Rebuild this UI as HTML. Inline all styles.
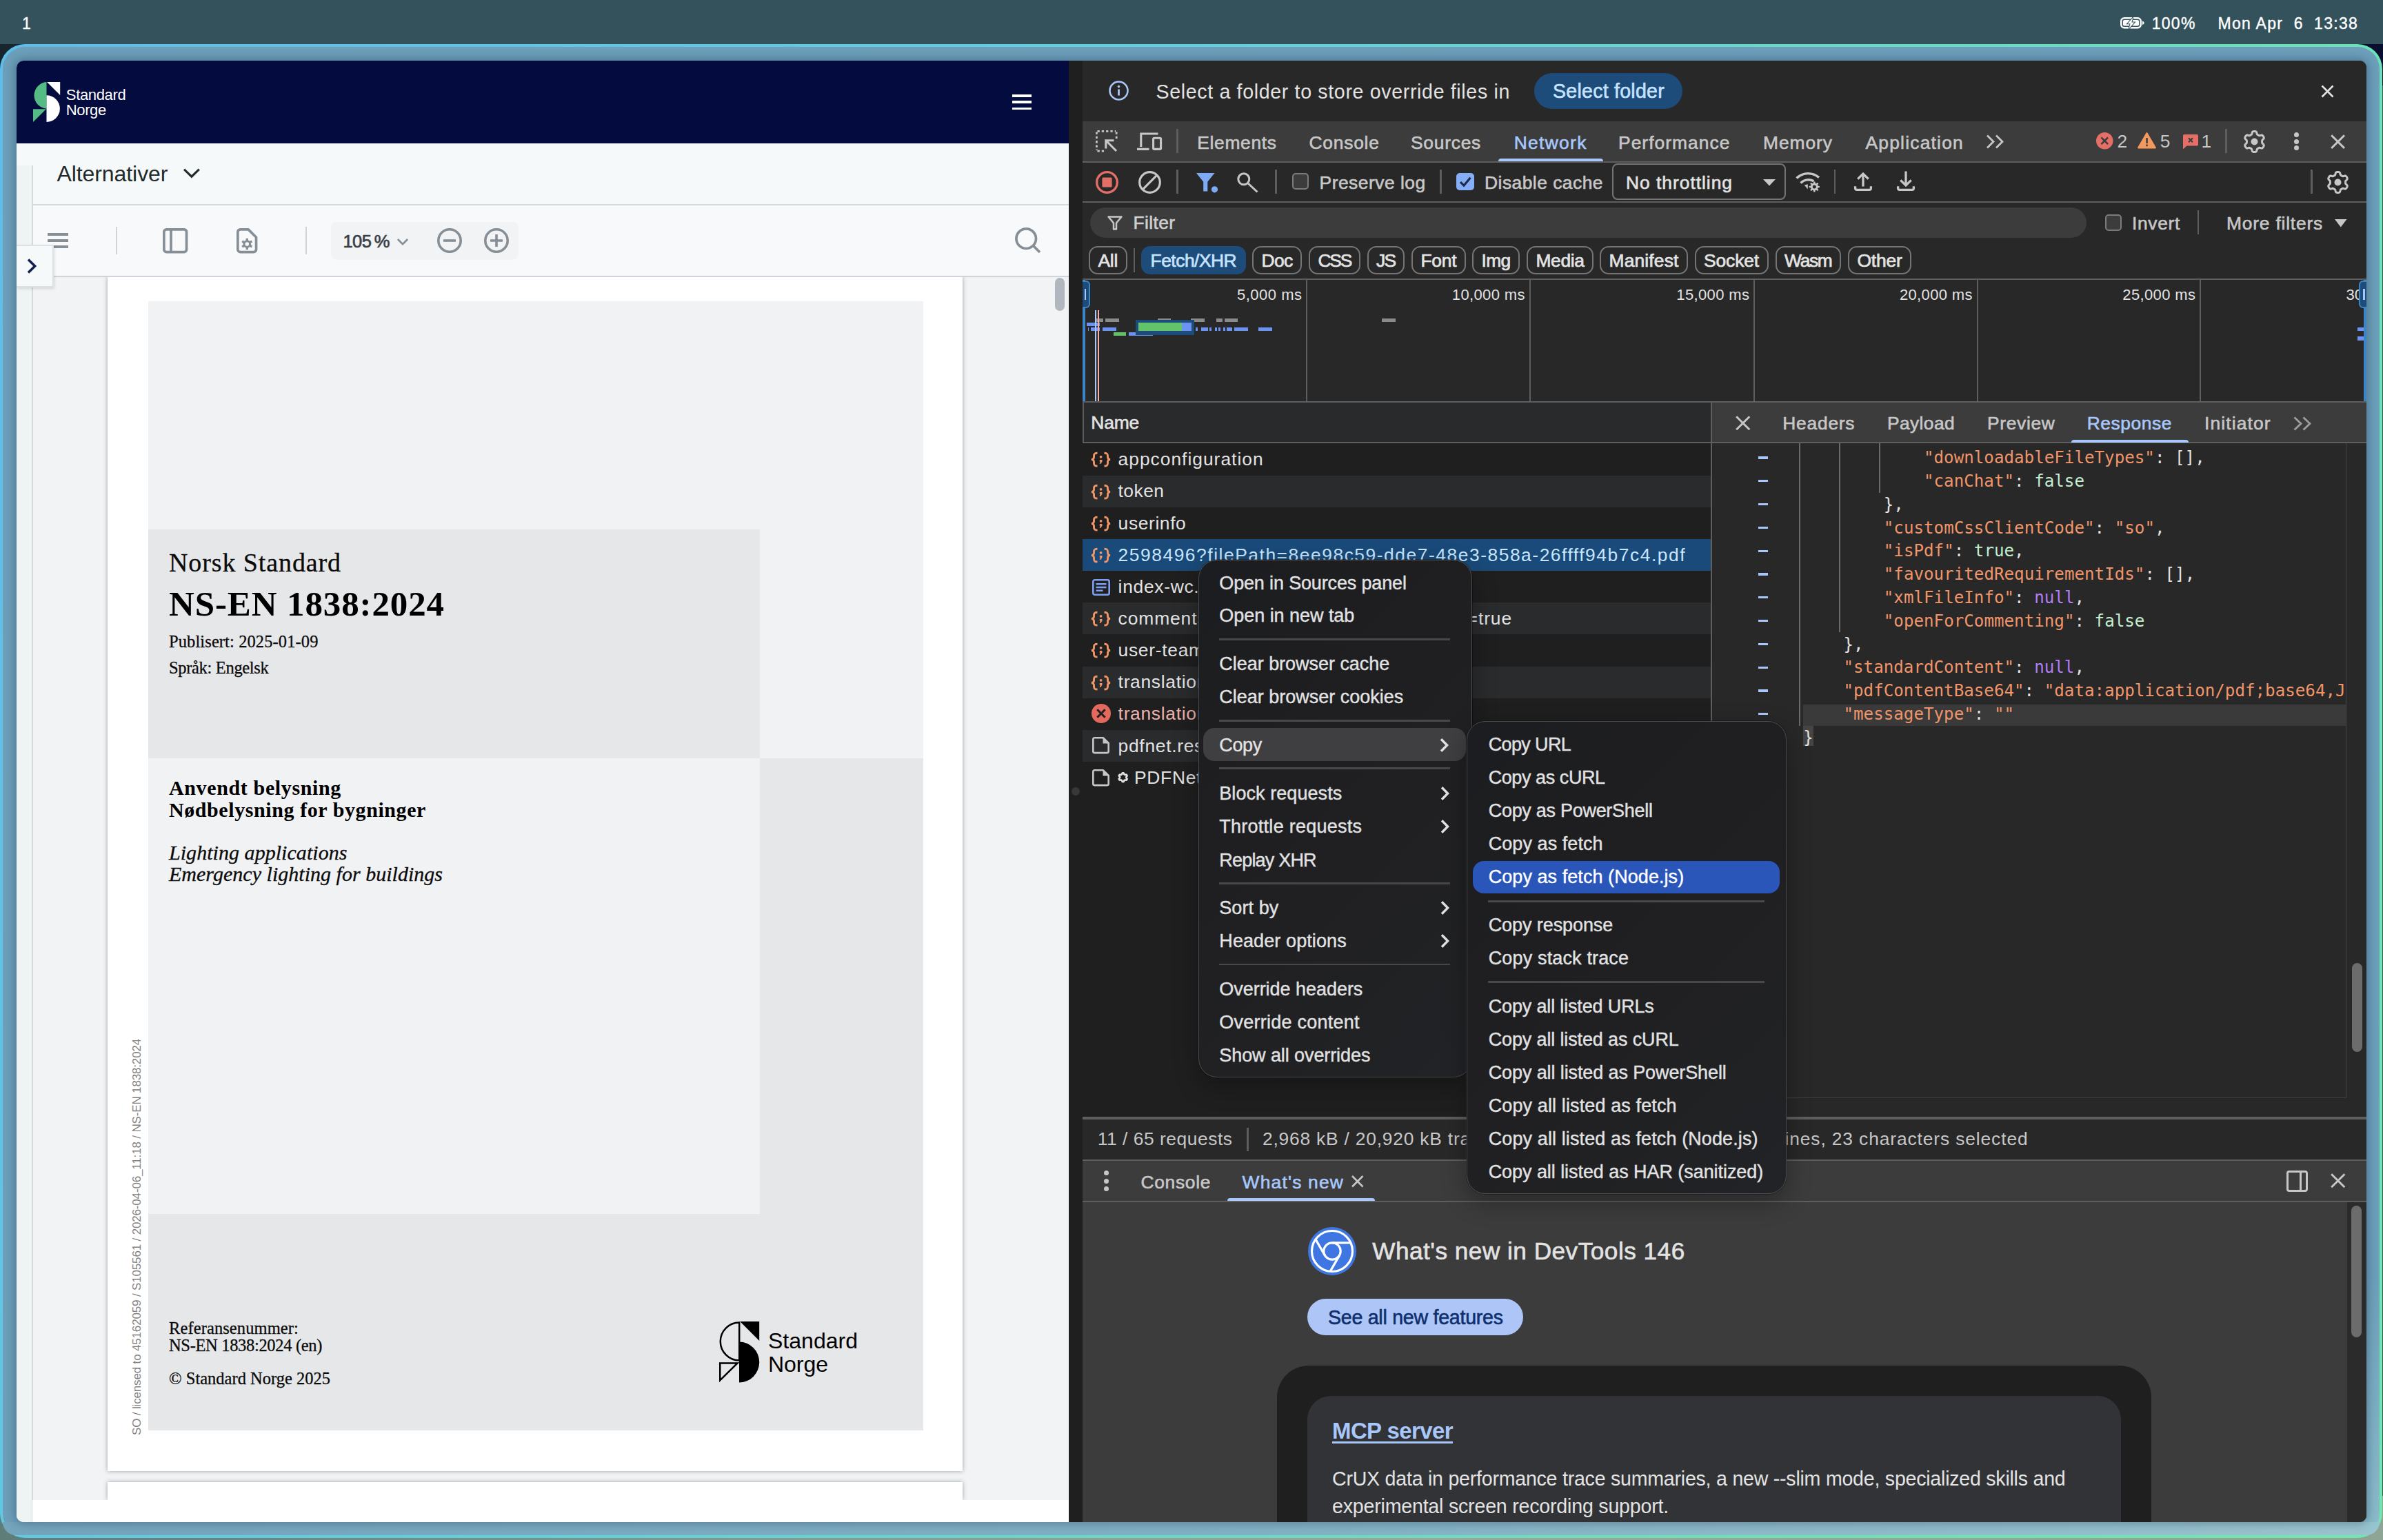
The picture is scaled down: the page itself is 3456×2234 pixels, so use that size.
<!DOCTYPE html><html lang="en"><head><meta charset="utf-8"><title>NS-EN 1838:2024 - DevTools</title><style>
html,body{margin:0;padding:0}
body{width:3456px;height:2234px;position:relative;overflow:hidden;background:#34525b;font-family:"Liberation Sans",Arial,sans-serif;}
div,svg,section,header,nav,main,aside,footer,ul,li,button,a,h1,h2,p,.t{position:absolute;box-sizing:border-box;margin:0;padding:0}
section,header,nav,main,aside,footer,ul{left:0;top:0}
li{list-style:none}
button{border:0;font:inherit}
a{text-decoration:none}
.t{white-space:pre;line-height:1;font-weight:400}
svg{overflow:visible}
.clip{overflow:hidden}
@media (min-resolution:1.5dppx) and (max-width:1800px){html{zoom:.5}}
</style></head><body><header id="menubar" style=""><div style="left:0px;top:0px;width:3456px;height:64px;background:#34525b;"></div><span class="t" style="left:32.0px;top:23.0px;font-size:23px;color:#ffffff;-webkit-text-stroke:.4px;">1</span><svg style="left:3075px;top:25px;" width="36" height="17" viewBox="0 0 36 17"><rect x="1.25" y="1.25" width="28.5" height="14" rx="4.5" fill="none" stroke="#fff" stroke-width="2.5"/><rect x="4" y="4" width="23" height="8.5" rx="2" fill="#fff"/><path d="M32 5.5v5.5c1.6-.5 2.6-1.500 2.600-2.750S33.600 6 32 5.500z" fill="#fff"/><path d="M18.500 0.500 10.500 9.200h4.200L12.500 16.500 20.500 7.600h-4.200z" fill="#fff" stroke="#34525b" stroke-width="2" paint-order="stroke"/></svg><span class="t" style="left:3120.7px;top:23.0px;font-size:23px;color:#ffffff;letter-spacing:1.293px;-webkit-text-stroke:.4px;">100%</span><span class="t" style="left:3216.6px;top:23.0px;font-size:23px;color:#ffffff;letter-spacing:1.290px;-webkit-text-stroke:.4px;">Mon Apr  6  13:38</span></header><div style="left:0px;top:64px;width:60px;height:60px;background:#16262c;"></div><div style="left:3396px;top:64px;width:60px;height:60px;background:#0a0e2e;"></div><div style="left:0px;top:2170px;width:3456px;height:64px;background:linear-gradient(90deg,#5f7d78 0%,#7f9a8c 30%,#9aa79a 60%,#8ea596 100%);"></div><div id="window" style="left:0px;top:64px;width:3455px;height:2167px;border-radius:36px;background:linear-gradient(115deg,#60bcea 0%,#63cfdb 40%,#6be0b8 75%,#70e8ac 100%);"><div style="left:4px;top:4px;width:3447px;height:2159px;background:#6c9fba;border-radius:32px;"></div><div style="left:4px;top:2144px;width:3447px;height:19px;border-radius:0 0 32px 32px;background:linear-gradient(90deg,#74a5bd 0%,#81b0c4 50%,#9ac3ce 100%);"></div><div style="left:3428px;top:1786px;width:23px;height:377px;border-radius:0 0 30px 0;background:linear-gradient(180deg,rgba(150,198,208,0) 0%,rgba(150,198,208,.75) 100%);"></div><div style="left:24px;top:24px;width:3408px;height:2120px;border-radius:10px;box-shadow:0 0 14px 2px rgba(25,50,75,.38);"></div></div><main id="page" class="clip" style="left:24px;top:88px;width:1526px;height:2120px;border-radius:10px 0 0 10px;background:#f1f3f5;"><header id="site-header" style=""><div style="left:0px;top:0px;width:1526px;height:120px;background:#030b3f;"></div><svg style="left:24px;top:31px;" width="39.2" height="58" viewBox="0 0 39.2 58"><path d="M19.500 0A19.400 19.400 0 0 0 19.500 38.700z" fill="#55bb85"/><path d="M0 39.200H18.900L0 58z" fill="#55bb85"/><path d="M20.100 0H39.200V19.100z" fill="#fff"/><path d="M19.500 19.300A19.400 19.350 0 0 1 19.500 58z" fill="#fff"/></svg><span class="t" style="left:71.8px;top:38.5px;font-size:22px;color:#fff;letter-spacing:-0.337px;">Standard</span><span class="t" style="left:71.8px;top:60.8px;font-size:22px;color:#fff;letter-spacing:-0.384px;">Norge</span><div style="left:1444.3px;top:49px;width:27.7px;height:3.6px;background:#fff;"></div><div style="left:1444.3px;top:58.3px;width:27.7px;height:3.6px;background:#fff;"></div><div style="left:1444.3px;top:67.5px;width:27.7px;height:3.6px;background:#fff;"></div></header><nav id="alt-bar" style=""><div style="left:0px;top:120px;width:1526px;height:89px;background:#f6f9f9;"></div><div style="left:23px;top:208px;width:1503px;height:2px;background:#d5dadd;"></div><span class="t" style="left:58.4px;top:147.7px;font-size:32px;color:#222a2b;letter-spacing:-0.070px;">Alternativer</span><svg style="left:242px;top:156px;" width="24" height="16" viewBox="0 0 24 16"><path d="M2.200 2.800 11.900 12.200 21.600 2.800" fill="none" stroke="#222a2b" stroke-width="3.200" stroke-linecap="square"/></svg></nav><div style="left:0px;top:152px;width:23px;height:1968px;background:#eef3f4;"></div><div style="left:22px;top:152px;width:2px;height:1968px;background:#d4d9dc;"></div><nav id="pdf-toolbar" style=""><div style="left:24px;top:210px;width:1502px;height:102px;background:#f8f9fb;"></div><div style="left:24px;top:311.8px;width:1502px;height:2px;background:#cfd4da;"></div><div style="left:45px;top:250px;width:30px;height:3.7px;background:#868e96;"></div><div style="left:45px;top:259.2px;width:30px;height:3.7px;background:#868e96;"></div><div style="left:45px;top:268.4px;width:30px;height:3.7px;background:#868e96;"></div><div style="left:144px;top:241px;width:2px;height:40px;background:#ced4da;"></div><svg style="left:211.8px;top:242.8px;" width="36.4" height="36.4" viewBox="0 0 36.4 36.4"><rect x="1.850" y="1.850" width="32.700" height="32.700" rx="3.500" fill="none" stroke="#868e96" stroke-width="3.700"/><path d="M12 2v32" stroke="#868e96" stroke-width="3.700"/></svg><svg style="left:318.8px;top:242.8px;" width="30.4" height="36.4" viewBox="0 0 30.4 36.4"><path d="M5.500 1.850H17.200L28.550 13.200V31a3.600 3.600 0 0 1-3.600 3.550H5.500A3.600 3.600 0 0 1 1.850 31V5.500A3.600 3.600 0 0 1 5.500 1.850z" fill="none" stroke="#868e96" stroke-width="3.700" stroke-linejoin="round"/><g transform="translate(15.300 23)"><circle r="4.300" fill="none" stroke="#868e96" stroke-width="3"/><rect x="-1.700" y="-8.200" width="3.400" height="3.600" fill="#868e96" transform="rotate(0)"/><rect x="-1.700" y="-8.200" width="3.400" height="3.600" fill="#868e96" transform="rotate(60)"/><rect x="-1.700" y="-8.200" width="3.400" height="3.600" fill="#868e96" transform="rotate(120)"/><rect x="-1.700" y="-8.200" width="3.400" height="3.600" fill="#868e96" transform="rotate(180)"/><rect x="-1.700" y="-8.200" width="3.400" height="3.600" fill="#868e96" transform="rotate(240)"/><rect x="-1.700" y="-8.200" width="3.400" height="3.600" fill="#868e96" transform="rotate(300)"/></g></svg><div style="left:418.7px;top:241px;width:2px;height:40px;background:#ced4da;"></div><div style="left:456px;top:233.5px;width:272px;height:55.5px;background:#f1f3f5;border-radius:8px;"></div><span class="t" style="left:473.4px;top:249.6px;font-size:25.5px;color:#3a4047;letter-spacing:-0.546px;-webkit-text-stroke:.7px;">105 %</span><svg style="left:551px;top:257px;" width="18" height="12" viewBox="0 0 18 12"><path d="M1.900 2 9 9.200 16.100 2" fill="none" stroke="#868e96" stroke-width="2.700"/></svg><svg style="left:610px;top:243px;" width="36" height="36" viewBox="0 0 36 36"><circle cx="18" cy="18" r="16.200" fill="none" stroke="#868e96" stroke-width="3.600"/><path d="M9 18H27" stroke="#868e96" stroke-width="3.600"/></svg><svg style="left:678px;top:243px;" width="36" height="36" viewBox="0 0 36 36"><circle cx="18" cy="18" r="16.200" fill="none" stroke="#868e96" stroke-width="3.600"/><path d="M9 18H27M18 9V27" stroke="#868e96" stroke-width="3.600"/></svg><svg style="left:1447.7px;top:242px;" width="38" height="38" viewBox="0 0 38 38"><circle cx="16.200" cy="16.200" r="14.300" fill="none" stroke="#868e96" stroke-width="3.700"/><path d="M26.500 26.500 36 36" stroke="#868e96" stroke-width="3.700"/></svg></nav><section id="pdf-viewer" class="clip" style="left:24px;top:313.8px;width:1502px;height:1774.2px;"><div class="clip" style="left:108px;top:-0.8px;width:1240px;height:1733px;background:#fff;box-shadow:0 0 6px rgba(60,64,67,.45);overflow:visible;"><div style="left:59px;top:36px;width:1124px;height:1638px;background:#f1f2f4;"></div><div style="left:59px;top:367px;width:887px;height:332px;background:#e6e7e9;"></div><div style="left:946px;top:699px;width:237px;height:975px;background:#e6e7e9;"></div><div style="left:59px;top:1360px;width:887px;height:314px;background:#e6e7e9;"></div><p class="t" style="left:89.0px;top:396.0px;font-size:38px;color:#0b0b0b;font-family:'Liberation Serif', 'Times New Roman', serif;letter-spacing:0.895px;-webkit-text-stroke:.3px;">Norsk Standard</p><h1 class="t" style="left:89.0px;top:450.0px;font-size:51px;color:#000;font-family:'Liberation Serif', 'Times New Roman', serif;font-weight:700;letter-spacing:0.882px;">NS-EN 1838:2024</h1><p class="t" style="left:89.0px;top:517.7px;font-size:24.5px;color:#0b0b0b;font-family:'Liberation Serif', 'Times New Roman', serif;letter-spacing:0.101px;-webkit-text-stroke:.3px;">Publisert: 2025-01-09</p><p class="t" style="left:89.0px;top:555.8px;font-size:24.5px;color:#0b0b0b;font-family:'Liberation Serif', 'Times New Roman', serif;letter-spacing:-0.324px;-webkit-text-stroke:.3px;">Språk: Engelsk</p><h2 class="t" style="left:89.0px;top:727.0px;font-size:30px;color:#000;font-family:'Liberation Serif', 'Times New Roman', serif;font-weight:700;letter-spacing:0.632px;">Anvendt belysning</h2><h2 class="t" style="left:89.0px;top:759.0px;font-size:30px;color:#000;font-family:'Liberation Serif', 'Times New Roman', serif;font-weight:700;letter-spacing:0.582px;">Nødbelysning for bygninger</h2><p class="t" style="left:89.0px;top:820.5px;font-size:30px;color:#0b0b0b;font-family:'Liberation Serif', 'Times New Roman', serif;font-style:italic;letter-spacing:0.046px;-webkit-text-stroke:.3px;">Lighting applications</p><p class="t" style="left:89.0px;top:852.0px;font-size:30px;color:#0b0b0b;font-family:'Liberation Serif', 'Times New Roman', serif;font-style:italic;letter-spacing:0.021px;-webkit-text-stroke:.3px;">Emergency lighting for buildings</p><p class="t" style="left:89.0px;top:1514.0px;font-size:24.5px;color:#0b0b0b;font-family:'Liberation Serif', 'Times New Roman', serif;letter-spacing:0.100px;-webkit-text-stroke:.3px;">Referansenummer:</p><p class="t" style="left:89.0px;top:1539.0px;font-size:24.5px;color:#0b0b0b;font-family:'Liberation Serif', 'Times New Roman', serif;letter-spacing:-0.332px;-webkit-text-stroke:.3px;">NS-EN 1838:2024 (en)</p><p class="t" style="left:89.0px;top:1587.0px;font-size:24.5px;color:#0b0b0b;font-family:'Liberation Serif', 'Times New Roman', serif;letter-spacing:0.006px;-webkit-text-stroke:.3px;">© Standard Norge 2025</p><p class="t" style="left:51.0px;top:1664.0px;font-size:17px;color:#828282;letter-spacing:-0.161px;transform-origin:0 100%;transform:rotate(-90deg);">SO / licensed to 45162059 / S105561 / 2026-04-06_11:18 / NS-EN 1838:2024</p><svg style="left:887px;top:1516px;" width="58.2" height="88.6" viewBox="0 0 58.2 88.6"><path d="M29.200 1.500A27.400 27.400 0 0 0 29.200 56.400z" fill="none" stroke="#000" stroke-width="2.500"/><path d="M1.250 60.450H26.500L1.250 85.300z" fill="none" stroke="#000" stroke-width="2.500" stroke-linejoin="miter"/><path d="M30.200 0H58.200V28z" fill="#000"/><path d="M29 29.500A29.200 29.500 0 0 1 29 88.600z" fill="#000"/></svg><span class="t" style="left:958.0px;top:1528.0px;font-size:32px;color:#000;letter-spacing:0.016px;">Standard</span><span class="t" style="left:958.0px;top:1562.0px;font-size:32px;color:#000;letter-spacing:-0.031px;">Norge</span></div><div style="left:108px;top:1748.2px;width:1240px;height:26px;background:#fff;box-shadow:0 0 6px rgba(60,64,67,.45);"></div><div style="left:1482px;top:1.2px;width:14px;height:48.5px;background:#b2b7bf;border-radius:7px;"></div></section><div style="left:23px;top:2088px;width:1503px;height:32px;background:#fff;"></div><button id="rail-toggle" style="left:0px;top:266.6px;width:54px;height:62.6px;background:#f6f9f9;border:2px solid #dde1e5;border-left:0;box-shadow:1px 2px 4px rgba(0,0,0,.12);"><svg style="left:14px;top:16.4px;" width="18" height="26" viewBox="0 0 18 26"><path d="M3 3.500 12.600 13 3 22.500" fill="none" stroke="#131f50" stroke-width="3.600"/></svg></button></main><div style="left:1550px;top:88px;width:20px;height:2120px;background:#1f1f1f;"></div><div style="left:1554px;top:1142px;width:11.5px;height:11.5px;background:#383838;border-radius:6px;"></div><aside id="devtools" class="clip" style="left:1570px;top:88px;width:1862px;height:2120px;border-radius:0 10px 10px 0;background:#282828;"><div id="infobar" style=""><div style="left:0px;top:0px;width:1862px;height:88px;background:#282828;"></div><svg style="left:38px;top:29px;" width="29" height="29" viewBox="0 0 29 29"><circle cx="14.500" cy="14.500" r="13" fill="none" stroke="#a8c7fa" stroke-width="2.600"/><rect x="13.100" y="12.500" width="2.800" height="9" fill="#a8c7fa"/><circle cx="14.500" cy="8.600" r="1.800" fill="#a8c7fa"/></svg><span class="t" style="left:106.5px;top:30.9px;font-size:28.6px;color:#e3e3e3;letter-spacing:0.647px;">Select a folder to store override files in</span><button style="left:655px;top:18px;width:215px;height:52px;background:#1d4b7a;border-radius:26px;"><span class="t" style="left:27.0px;top:11.5px;font-size:28.6px;color:#c5e3ff;letter-spacing:0.234px;-webkit-text-stroke:.6px;">Select folder</span></button><svg style="left:1796px;top:35px;" width="19" height="19" viewBox="0 0 19 19"><path d="M1.500 1.500 17.500 17.500M17.500 1.500 1.500 17.500" stroke="#e3e3e3" stroke-width="2.600"/></svg></div><nav id="main-tabs" style=""><div style="left:0px;top:88px;width:1862px;height:58.3px;background:#3c3c3c;"></div><div style="left:0px;top:146.3px;width:1862px;height:2px;background:#5e5e5e;"></div><svg style="left:19.3px;top:101.2px;" width="31.6" height="31.6" viewBox="0 0 31.6 31.6"><path d="M2.500 1.400H29.100M1.400 2.500V29.100M30.200 2.500V14M2.500 30.200H12" fill="none" stroke="#c7c7c7" stroke-width="2.800" stroke-dasharray="3.300 3"/><path d="M30 30 15.500 15.500M14.800 26.500V14.800H26.500" fill="none" stroke="#c7c7c7" stroke-width="3.100"/></svg><svg style="left:79.2px;top:104px;" width="36.2" height="26" viewBox="0 0 36.2 26"><path d="M5.800 21V2H30.500" fill="none" stroke="#c7c7c7" stroke-width="3.100"/><path d="M0 24.400H17.500" stroke="#c7c7c7" stroke-width="3.200"/><rect x="23.600" y="8.200" width="11" height="16.200" rx="1.500" fill="none" stroke="#c7c7c7" stroke-width="3.100"/></svg><div style="left:136px;top:99px;width:3px;height:35px;background:#5e5e5e;"></div><span class="t" style="left:166.2px;top:105.5px;font-size:26.4px;color:#c7c7c7;letter-spacing:0.686px;-webkit-text-stroke:.6px;">Elements</span><span class="t" style="left:328.4px;top:105.5px;font-size:26.4px;color:#c7c7c7;letter-spacing:0.782px;-webkit-text-stroke:.6px;">Console</span><span class="t" style="left:476.0px;top:105.5px;font-size:26.4px;color:#c7c7c7;letter-spacing:0.739px;-webkit-text-stroke:.6px;">Sources</span><span class="t" style="left:625.7px;top:105.5px;font-size:26.4px;color:#a8c7fa;letter-spacing:1.315px;-webkit-text-stroke:.6px;">Network</span><span class="t" style="left:777.0px;top:105.5px;font-size:26.4px;color:#c7c7c7;letter-spacing:1.038px;-webkit-text-stroke:.6px;">Performance</span><span class="t" style="left:987.0px;top:105.5px;font-size:26.4px;color:#c7c7c7;letter-spacing:0.948px;-webkit-text-stroke:.6px;">Memory</span><span class="t" style="left:1135.5px;top:105.5px;font-size:26.4px;color:#c7c7c7;letter-spacing:1.217px;-webkit-text-stroke:.6px;">Application</span><div style="left:603px;top:142.3px;width:151.5px;height:4px;background:#a8c7fa;border-radius:4px 4px 0 0;"></div><svg style="left:1310px;top:106.5px;" width="28" height="21" viewBox="0 0 28 21"><path d="M2 1.500 11 10.500 2 19.500M15 1.500 24 10.500 15 19.500" fill="none" stroke="#c7c7c7" stroke-width="2.800"/></svg><svg style="left:1470px;top:103.8px;" width="24.5" height="24.5" viewBox="0 0 24.5 24.5"><circle cx="12.250" cy="12.250" r="12.250" fill="#e36f66"/><path d="M7.400 7.400 17.100 17.100M17.100 7.400 7.400 17.100" stroke="#3c3c3c" stroke-width="2.600"/></svg><span class="t" style="left:1500.6px;top:103.7px;font-size:26.4px;color:#c7c7c7;">2</span><svg style="left:1530px;top:104px;" width="27" height="23.5" viewBox="0 0 27 23.5"><path d="M13.500 1.300 25.700 22.300H1.300z" fill="#f3985f" stroke="#f3985f" stroke-width="2.400" stroke-linejoin="round"/><rect x="12.300" y="8" width="2.500" height="8" fill="#3c3c3c"/><rect x="12.300" y="17.600" width="2.500" height="2.600" fill="#3c3c3c"/></svg><span class="t" style="left:1562.8px;top:103.7px;font-size:26.4px;color:#c7c7c7;">5</span><svg style="left:1596.3px;top:107px;" width="22" height="21.5" viewBox="0 0 22 21.5"><path d="M2 0H20.200A1.800 1.800 0 0 1 22 1.800V14.700A1.800 1.800 0 0 1 20.200 16.500H5.500L0 21.500V1.800A1.800 1.800 0 0 1 2 0z" fill="#e36f66"/><path d="M8 5.200 14 11.200M14 5.200 8 11.200" stroke="#3c3c3c" stroke-width="2.100"/></svg><span class="t" style="left:1622.6px;top:103.7px;font-size:26.4px;color:#c7c7c7;">1</span><div style="left:1657px;top:99px;width:3px;height:35px;background:#5e5e5e;"></div><svg style="left:1682.5px;top:100.5px;" width="33" height="33" viewBox="0 0 33 33"><path d="M16.50 1.50L17.15 1.52L17.80 1.60L18.44 1.75L19.04 2.07L19.55 2.75L19.88 3.89L20.11 5.04L20.42 5.74L20.79 6.13L21.21 6.41L21.63 6.65L22.05 6.89L22.47 7.13L22.89 7.38L23.33 7.60L23.86 7.73L24.62 7.64L25.73 7.27L26.88 6.99L27.72 7.08L28.30 7.44L28.76 7.92L29.14 8.44L29.49 9.00L29.80 9.58L30.06 10.18L30.25 10.81L30.27 11.49L29.93 12.27L29.11 13.12L28.24 13.90L27.78 14.51L27.63 15.04L27.60 15.53L27.60 16.02L27.60 16.50L27.60 16.98L27.60 17.47L27.63 17.96L27.78 18.49L28.24 19.10L29.11 19.88L29.93 20.73L30.27 21.51L30.25 22.19L30.06 22.82L29.80 23.42L29.49 24.00L29.14 24.56L28.76 25.08L28.30 25.56L27.72 25.92L26.88 26.01L25.73 25.73L24.62 25.36L23.86 25.27L23.33 25.40L22.89 25.62L22.47 25.87L22.05 26.11L21.63 26.35L21.21 26.59L20.79 26.87L20.42 27.26L20.11 27.96L19.88 29.11L19.55 30.25L19.04 30.93L18.44 31.25L17.80 31.40L17.15 31.48L16.50 31.50L15.85 31.48L15.20 31.40L14.56 31.25L13.96 30.93L13.45 30.25L13.12 29.11L12.89 27.96L12.58 27.26L12.21 26.87L11.79 26.59L11.37 26.35L10.95 26.11L10.53 25.87L10.11 25.62L9.67 25.40L9.14 25.27L8.38 25.36L7.27 25.73L6.12 26.01L5.28 25.92L4.70 25.56L4.24 25.08L3.86 24.56L3.51 24.00L3.20 23.42L2.94 22.82L2.75 22.19L2.73 21.51L3.07 20.73L3.89 19.88L4.76 19.10L5.22 18.49L5.37 17.96L5.40 17.47L5.40 16.98L5.40 16.50L5.40 16.02L5.40 15.53L5.37 15.04L5.22 14.51L4.76 13.90L3.89 13.12L3.07 12.27L2.73 11.49L2.75 10.81L2.94 10.18L3.20 9.58L3.51 9.00L3.86 8.44L4.24 7.92L4.70 7.44L5.28 7.08L6.12 6.99L7.27 7.27L8.38 7.64L9.14 7.73L9.67 7.60L10.11 7.38L10.53 7.13L10.95 6.89L11.37 6.65L11.79 6.41L12.21 6.13L12.58 5.74L12.89 5.04L13.12 3.89L13.45 2.75L13.96 2.07L14.56 1.75L15.20 1.60L15.85 1.52z" fill="none" stroke="#c7c7c7" stroke-width="3.0" stroke-linejoin="round"/><circle cx="16.5" cy="16.5" r="5.0" fill="#c7c7c7"/></svg><div style="left:1757.2px;top:103.7px;width:7px;height:7px;background:#c7c7c7;border-radius:4px;"></div><div style="left:1757.2px;top:113.5px;width:7px;height:7px;background:#c7c7c7;border-radius:4px;"></div><div style="left:1757.2px;top:123.2px;width:7px;height:7px;background:#c7c7c7;border-radius:4px;"></div><svg style="left:1809.5px;top:106.7px;" width="21.2" height="21.2" viewBox="0 0 21.2 21.2"><path d="M1.200 1.200 20 20M20 1.200 1.200 20" stroke="#c7c7c7" stroke-width="3"/></svg></nav><div id="network-toolbar" style=""><div style="left:0px;top:204px;width:1862px;height:2px;background:#5e5e5e;"></div><svg style="left:18.5px;top:159.5px;" width="33" height="33" viewBox="0 0 33 33"><circle cx="16.500" cy="16.500" r="14.800" fill="none" stroke="#e36f66" stroke-width="3.300"/><rect x="9.400" y="9.400" width="14.200" height="14.200" rx="1.500" fill="#e36f66"/></svg><svg style="left:80.5px;top:159.5px;" width="33" height="33" viewBox="0 0 33 33"><circle cx="16.500" cy="16.500" r="14.800" fill="none" stroke="#c7c7c7" stroke-width="3.200"/><path d="M6.200 26.800 26.800 6.200" stroke="#c7c7c7" stroke-width="3.200"/></svg><div style="left:136px;top:158px;width:3px;height:35px;background:#5e5e5e;"></div><svg style="left:164.8px;top:162.5px;" width="32" height="28" viewBox="0 0 32 28"><path d="M0 0H26.500L16.300 12.800V26.500H10.200V12.800z" fill="#7cacf8"/><circle cx="26.500" cy="23.800" r="4.600" fill="#7cacf8"/></svg><svg style="left:224px;top:162px;" width="32" height="30" viewBox="0 0 32 30"><circle cx="9.800" cy="9.800" r="8" fill="none" stroke="#c7c7c7" stroke-width="3"/><path d="M15.500 15.500 29.500 28.500" stroke="#c7c7c7" stroke-width="3"/></svg><div style="left:279px;top:158px;width:3px;height:35px;background:#5e5e5e;"></div><div style="left:304px;top:163px;width:24px;height:24px;background:#3c3c3c;border-radius:5px;border:2px solid #7c7c7c;"></div><span class="t" style="left:343.6px;top:163.7px;font-size:26.4px;color:#c7c7c7;letter-spacing:0.487px;-webkit-text-stroke:.6px;">Preserve log</span><div style="left:517.5px;top:158px;width:3px;height:35px;background:#5e5e5e;"></div><div style="left:542px;top:163px;width:26px;height:25px;background:#86aef6;border-radius:5px;"></div><svg style="left:542px;top:163px;" width="26" height="25" viewBox="0 0 26 25"><path d="M6 13 11 18.200 20.500 6.800" fill="none" stroke="#1c2b4a" stroke-width="3.200"/></svg><span class="t" style="left:583.0px;top:163.7px;font-size:26.4px;color:#c7c7c7;letter-spacing:0.478px;-webkit-text-stroke:.6px;">Disable cache</span><div style="left:768px;top:149.3px;width:252px;height:52.3px;border-radius:8px;border:2px solid #757575;"></div><span class="t" style="left:788.0px;top:163.7px;font-size:26.4px;color:#e3e3e3;letter-spacing:0.977px;-webkit-text-stroke:.6px;">No throttling</span><svg style="left:987px;top:172px;" width="19" height="10" viewBox="0 0 19 10"><path d="M0 0H18L9 9.500z" fill="#c7c7c7"/></svg><svg style="left:1034px;top:160px;" width="37" height="32" viewBox="0 0 37 32"><path d="M1.500 10.500A24 24 0 0 1 34 9.500" fill="none" stroke="#c7c7c7" stroke-width="3.400"/><path d="M7.500 17.500A15.500 15.500 0 0 1 26.500 14.800" fill="none" stroke="#c7c7c7" stroke-width="3.400"/><path d="M12.800 20.500 17.800 26.500V19.200z" fill="#c7c7c7"/><path d="M27.30 15.40L27.63 15.41L27.96 15.45L28.28 15.56L28.52 16.08L28.59 17.17L28.72 17.69L28.93 17.83L29.15 17.92L29.37 18.01L29.58 18.10L29.80 18.20L30.05 18.24L30.51 17.96L31.33 17.24L31.87 17.05L32.17 17.19L32.43 17.40L32.67 17.63L32.90 17.87L33.11 18.13L33.25 18.43L33.06 18.97L32.34 19.79L32.06 20.25L32.10 20.50L32.20 20.72L32.29 20.93L32.38 21.15L32.47 21.37L32.61 21.58L33.13 21.71L34.22 21.78L34.74 22.02L34.85 22.34L34.89 22.67L34.90 23.00L34.89 23.33L34.85 23.66L34.74 23.98L34.22 24.22L33.13 24.29L32.61 24.42L32.47 24.63L32.38 24.85L32.29 25.07L32.20 25.28L32.10 25.50L32.06 25.75L32.34 26.21L33.06 27.03L33.25 27.57L33.11 27.87L32.90 28.13L32.67 28.37L32.43 28.60L32.17 28.81L31.87 28.95L31.33 28.76L30.51 28.04L30.05 27.76L29.80 27.80L29.58 27.90L29.37 27.99L29.15 28.08L28.93 28.17L28.72 28.31L28.59 28.83L28.52 29.92L28.28 30.44L27.96 30.55L27.63 30.59L27.30 30.60L26.97 30.59L26.64 30.55L26.32 30.44L26.08 29.92L26.01 28.83L25.88 28.31L25.67 28.17L25.45 28.08L25.23 27.99L25.02 27.90L24.80 27.80L24.55 27.76L24.09 28.04L23.27 28.76L22.73 28.95L22.43 28.81L22.17 28.60L21.93 28.37L21.70 28.13L21.49 27.87L21.35 27.57L21.54 27.03L22.26 26.21L22.54 25.75L22.50 25.50L22.40 25.28L22.31 25.07L22.22 24.85L22.13 24.63L21.99 24.42L21.47 24.29L20.38 24.22L19.86 23.98L19.75 23.66L19.71 23.33L19.70 23.00L19.71 22.67L19.75 22.34L19.86 22.02L20.38 21.78L21.47 21.71L21.99 21.58L22.13 21.37L22.22 21.15L22.31 20.93L22.40 20.72L22.50 20.50L22.54 20.25L22.26 19.79L21.54 18.97L21.35 18.43L21.49 18.13L21.70 17.87L21.93 17.63L22.17 17.40L22.43 17.19L22.73 17.05L23.27 17.24L24.09 17.96L24.55 18.24L24.80 18.20L25.02 18.10L25.23 18.01L25.45 17.92L25.67 17.83L25.88 17.69L26.01 17.17L26.08 16.08L26.32 15.56L26.64 15.45L26.97 15.41z" fill="#c7c7c7"/><circle cx="27.300" cy="23" r="2.500" fill="#282828"/></svg><div style="left:1090.3px;top:158px;width:2px;height:35px;background:#5e5e5e;"></div><svg style="left:1118px;top:162px;" width="28" height="28" viewBox="0 0 28 28"><path d="M14 20.500V2M6.300 9.700 14 2 21.700 9.700M2.600 20.300V23a2.400 2.400 0 0 0 2.400 2.400H23a2.400 2.400 0 0 0 2.400-2.400V20.300" fill="none" stroke="#c7c7c7" stroke-width="3.300"/></svg><svg style="left:1180px;top:162px;" width="28" height="28" viewBox="0 0 28 28"><path d="M14-1.500V19M6.300 11.300 14 19 21.700 11.300M2.600 20.300V23a2.400 2.400 0 0 0 2.400 2.400H23a2.400 2.400 0 0 0 2.400-2.400V20.300" fill="none" stroke="#c7c7c7" stroke-width="3.300"/></svg><div style="left:1781px;top:158px;width:2.5px;height:35px;background:#5e5e5e;"></div><svg style="left:1803.5px;top:160px;" width="33" height="33" viewBox="0 0 33 33"><path d="M16.50 1.50L17.15 1.52L17.80 1.60L18.44 1.75L19.04 2.07L19.55 2.75L19.88 3.89L20.11 5.04L20.42 5.74L20.79 6.13L21.21 6.41L21.63 6.65L22.05 6.89L22.47 7.13L22.89 7.38L23.33 7.60L23.86 7.73L24.62 7.64L25.73 7.27L26.88 6.99L27.72 7.08L28.30 7.44L28.76 7.92L29.14 8.44L29.49 9.00L29.80 9.58L30.06 10.18L30.25 10.81L30.27 11.49L29.93 12.27L29.11 13.12L28.24 13.90L27.78 14.51L27.63 15.04L27.60 15.53L27.60 16.02L27.60 16.50L27.60 16.98L27.60 17.47L27.63 17.96L27.78 18.49L28.24 19.10L29.11 19.88L29.93 20.73L30.27 21.51L30.25 22.19L30.06 22.82L29.80 23.42L29.49 24.00L29.14 24.56L28.76 25.08L28.30 25.56L27.72 25.92L26.88 26.01L25.73 25.73L24.62 25.36L23.86 25.27L23.33 25.40L22.89 25.62L22.47 25.87L22.05 26.11L21.63 26.35L21.21 26.59L20.79 26.87L20.42 27.26L20.11 27.96L19.88 29.11L19.55 30.25L19.04 30.93L18.44 31.25L17.80 31.40L17.15 31.48L16.50 31.50L15.85 31.48L15.20 31.40L14.56 31.25L13.96 30.93L13.45 30.25L13.12 29.11L12.89 27.96L12.58 27.26L12.21 26.87L11.79 26.59L11.37 26.35L10.95 26.11L10.53 25.87L10.11 25.62L9.67 25.40L9.14 25.27L8.38 25.36L7.27 25.73L6.12 26.01L5.28 25.92L4.70 25.56L4.24 25.08L3.86 24.56L3.51 24.00L3.20 23.42L2.94 22.82L2.75 22.19L2.73 21.51L3.07 20.73L3.89 19.88L4.76 19.10L5.22 18.49L5.37 17.96L5.40 17.47L5.40 16.98L5.40 16.50L5.40 16.02L5.40 15.53L5.37 15.04L5.22 14.51L4.76 13.90L3.89 13.12L3.07 12.27L2.73 11.49L2.75 10.81L2.94 10.18L3.20 9.58L3.51 9.00L3.86 8.44L4.24 7.92L4.70 7.44L5.28 7.08L6.12 6.99L7.27 7.27L8.38 7.64L9.14 7.73L9.67 7.60L10.11 7.38L10.53 7.13L10.95 6.89L11.37 6.65L11.79 6.41L12.21 6.13L12.58 5.74L12.89 5.04L13.12 3.89L13.45 2.75L13.96 2.07L14.56 1.75L15.20 1.60L15.85 1.52z" fill="none" stroke="#c7c7c7" stroke-width="3.0" stroke-linejoin="round"/><circle cx="16.5" cy="16.5" r="5.0" fill="#c7c7c7"/></svg></div><div id="filter-bar" style=""><div style="left:11px;top:213px;width:1445px;height:43.5px;background:#3c3c3c;border-radius:22px;"></div><svg style="left:36px;top:225px;" width="22" height="21" viewBox="0 0 22 21"><path d="M1.500 1.500H20.500L13 10.500V19.500H9V10.500z" fill="none" stroke="#c7c7c7" stroke-width="2.500" stroke-linejoin="round"/></svg><span class="t" style="left:73.5px;top:222.0px;font-size:26.4px;color:#cfcfcf;letter-spacing:0.391px;-webkit-text-stroke:.6px;">Filter</span><div style="left:1483px;top:223px;width:24px;height:24px;background:#3c3c3c;border-radius:5px;border:2px solid #7c7c7c;"></div><span class="t" style="left:1522.0px;top:222.5px;font-size:26.4px;color:#c7c7c7;letter-spacing:0.664px;-webkit-text-stroke:.6px;">Invert</span><div style="left:1616.5px;top:217px;width:2.5px;height:35px;background:#5e5e5e;"></div><span class="t" style="left:1659.0px;top:222.5px;font-size:26.4px;color:#c7c7c7;letter-spacing:0.790px;-webkit-text-stroke:.6px;">More filters</span><svg style="left:1816px;top:230px;" width="18" height="12" viewBox="0 0 18 12"><path d="M0 0H17.500L8.750 11.500z" fill="#c7c7c7"/></svg></div><ul id="type-filters" style=""><li style="left:9px;top:269.3px;width:55.5px;height:40.3px;border:2px solid #757575;border-radius:13px;"><span class="t" style="left:11.5px;top:5.9px;font-size:26.4px;color:#e3e3e3;letter-spacing:-0.281px;-webkit-text-stroke:.7px;">All</span></li><li style="left:85px;top:269.3px;width:151.7px;height:40.3px;background:#1d4b7a;border-radius:13px;"><span class="t" style="left:13.5px;top:7.9px;font-size:26.4px;color:#c5e3ff;letter-spacing:-0.485px;-webkit-text-stroke:.7px;">Fetch/XHR</span></li><li style="left:246px;top:269.3px;width:72px;height:40.3px;border:2px solid #757575;border-radius:13px;"><span class="t" style="left:11.5px;top:5.9px;font-size:26.4px;color:#e3e3e3;letter-spacing:-0.646px;-webkit-text-stroke:.7px;">Doc</span></li><li style="left:328px;top:269.3px;width:74.7px;height:40.3px;border:2px solid #757575;border-radius:13px;"><span class="t" style="left:11.5px;top:5.9px;font-size:26.4px;color:#e3e3e3;letter-spacing:-2.189px;-webkit-text-stroke:.7px;">CSS</span></li><li style="left:412.5px;top:269.3px;width:54.5px;height:40.3px;border:2px solid #757575;border-radius:13px;"><span class="t" style="left:11.5px;top:5.9px;font-size:26.4px;color:#e3e3e3;letter-spacing:-1.656px;-webkit-text-stroke:.7px;">JS</span></li><li style="left:477px;top:269.3px;width:78.7px;height:40.3px;border:2px solid #757575;border-radius:13px;"><span class="t" style="left:11.5px;top:5.9px;font-size:26.4px;color:#e3e3e3;letter-spacing:-0.278px;-webkit-text-stroke:.7px;">Font</span></li><li style="left:565px;top:269.3px;width:69px;height:40.3px;border:2px solid #757575;border-radius:13px;"><span class="t" style="left:11.5px;top:5.9px;font-size:26.4px;color:#e3e3e3;letter-spacing:-0.667px;-webkit-text-stroke:.7px;">Img</span></li><li style="left:644px;top:269.3px;width:97px;height:40.3px;border:2px solid #757575;border-radius:13px;"><span class="t" style="left:11.5px;top:5.9px;font-size:26.4px;color:#e3e3e3;letter-spacing:-0.378px;-webkit-text-stroke:.7px;">Media</span></li><li style="left:750px;top:269.3px;width:128px;height:40.3px;border:2px solid #757575;border-radius:13px;"><span class="t" style="left:11.5px;top:5.9px;font-size:26.4px;color:#e3e3e3;letter-spacing:0.156px;-webkit-text-stroke:.7px;">Manifest</span></li><li style="left:887.5px;top:269.3px;width:107px;height:40.3px;border:2px solid #757575;border-radius:13px;"><span class="t" style="left:11.5px;top:5.9px;font-size:26.4px;color:#e3e3e3;letter-spacing:-0.115px;-webkit-text-stroke:.7px;">Socket</span></li><li style="left:1004.6px;top:269.3px;width:95.4px;height:40.3px;border:2px solid #757575;border-radius:13px;"><span class="t" style="left:11.5px;top:5.9px;font-size:26.4px;color:#e3e3e3;letter-spacing:-1.349px;-webkit-text-stroke:.7px;">Wasm</span></li><li style="left:1110px;top:269.3px;width:92px;height:40.3px;border:2px solid #757575;border-radius:13px;"><span class="t" style="left:11.5px;top:5.9px;font-size:26.4px;color:#e3e3e3;letter-spacing:-0.203px;-webkit-text-stroke:.7px;">Other</span></li><div style="left:73.5px;top:272px;width:2.5px;height:35px;background:#5e5e5e;"></div><div style="left:0px;top:315.5px;width:1862px;height:2px;background:#5e5e5e;"></div></ul><div id="overview" class="clip" style="left:0px;top:317.5px;width:1862px;height:177px;background:#282828;"><div style="left:324.2px;top:0px;width:2px;height:177px;background:#5e5e5e;"></div><span class="t" style="left:224.0px;top:11.4px;font-size:22px;color:#e3e3e3;letter-spacing:0.500px;">5,000 ms</span><div style="left:647.5px;top:0px;width:2px;height:177px;background:#5e5e5e;"></div><span class="t" style="left:535.8px;top:11.4px;font-size:22px;color:#e3e3e3;letter-spacing:0.363px;">10,000 ms</span><div style="left:973px;top:0px;width:2px;height:177px;background:#5e5e5e;"></div><span class="t" style="left:861.3px;top:11.4px;font-size:22px;color:#e3e3e3;letter-spacing:0.363px;">15,000 ms</span><div style="left:1296.6px;top:0px;width:2px;height:177px;background:#5e5e5e;"></div><span class="t" style="left:1184.9px;top:11.4px;font-size:22px;color:#e3e3e3;letter-spacing:0.363px;">20,000 ms</span><div style="left:1620px;top:0px;width:2px;height:177px;background:#5e5e5e;"></div><span class="t" style="left:1508.3px;top:11.4px;font-size:22px;color:#e3e3e3;letter-spacing:0.363px;">25,000 ms</span><span class="t" style="left:1832.6px;top:11.4px;font-size:22px;color:#e3e3e3;">30,000 ms</span><div style="left:20px;top:56.5px;width:10.4px;height:4.8px;background:#8a8a8a;"></div><div style="left:33px;top:56.5px;width:20px;height:4.8px;background:#8a8a8a;"></div><div style="left:108.7px;top:56.5px;width:19.7px;height:4.8px;background:#8a8a8a;"></div><div style="left:157.4px;top:56.5px;width:19.6px;height:4.8px;background:#8a8a8a;"></div><div style="left:194px;top:56.5px;width:9px;height:4.8px;background:#8a8a8a;"></div><div style="left:205.6px;top:56.5px;width:19.9px;height:4.8px;background:#8a8a8a;"></div><div style="left:434px;top:56.5px;width:20.3px;height:4.8px;background:#8a8a8a;"></div><div style="left:5.9px;top:62.9px;width:19.1px;height:4.4px;background:#6a93f3;"></div><div style="left:8px;top:69.5px;width:1.4px;height:4.8px;background:#6a93f3;"></div><div style="left:12px;top:69.5px;width:12.8px;height:4.8px;background:#6a93f3;"></div><div style="left:29.4px;top:69.5px;width:19.9px;height:4.8px;background:#6a93f3;"></div><div style="left:163.7px;top:69.5px;width:3.5px;height:4.8px;background:#6a93f3;"></div><div style="left:172px;top:69.5px;width:10px;height:4.8px;background:#6a93f3;"></div><div style="left:184.2px;top:69.5px;width:2.5px;height:4.8px;background:#6a93f3;"></div><div style="left:192px;top:69.5px;width:3px;height:4.8px;background:#6a93f3;"></div><div style="left:196.8px;top:69.5px;width:2.9px;height:4.8px;background:#6a93f3;"></div><div style="left:204px;top:69.5px;width:2.7px;height:4.8px;background:#6a93f3;"></div><div style="left:208.8px;top:69.5px;width:8.2px;height:4.8px;background:#6a93f3;"></div><div style="left:219.7px;top:69.5px;width:20.1px;height:4.8px;background:#6a93f3;"></div><div style="left:255px;top:69.5px;width:20.3px;height:4.8px;background:#6a93f3;"></div><div style="left:45px;top:76.5px;width:18px;height:4.7px;background:#63c36a;"></div><div style="left:67px;top:76.5px;width:35px;height:4.7px;background:#6a93f3;"></div><div style="left:77.2px;top:58.7px;width:84.8px;height:21.4px;background:#1d4b7a;"></div><div style="left:81.4px;top:62.9px;width:63px;height:11.6px;background:#63c36a;"></div><div style="left:144.4px;top:62.9px;width:13.6px;height:11.6px;background:#6a93f3;"></div><div style="left:1849px;top:69.7px;width:9px;height:5px;background:#6a93f3;"></div><div style="left:1849px;top:82.5px;width:9px;height:5.8px;background:#6a93f3;"></div><div style="left:17.5px;top:44.5px;width:2px;height:133px;background:#a8c7fa;"></div><div style="left:22px;top:44.5px;width:2px;height:133px;background:#f6aea9;"></div><div style="left:0px;top:0px;width:4px;height:177px;background:#3d85c6;"></div><div style="left:1858px;top:0px;width:4px;height:177px;background:#3d85c6;"></div><div style="left:-2px;top:1px;width:12.5px;height:40px;background:#1d4b7a;border-radius:0 6px 6px 0;border:2px solid #3d85c6;"></div><div style="left:2.5px;top:13.5px;width:2px;height:16px;background:#a8c7fa;"></div><div style="left:1851px;top:1px;width:13px;height:40px;background:#1d4b7a;border-radius:6px 0 0 6px;border:2px solid #3d85c6;"></div><div style="left:1857.3px;top:13.5px;width:2.4px;height:16px;background:#a8c7fa;"></div></div><div style="left:0px;top:494px;width:1862px;height:2px;background:#5e5e5e;"></div><section id="request-list" style=""><div style="left:0px;top:496px;width:911px;height:1036px;background:#1f1f1f;"></div><div style="left:0px;top:496px;width:911px;height:57.5px;background:#292a2c;"></div><div style="left:0px;top:496px;width:2px;height:58px;background:#5e5e5e;"></div><div style="left:0px;top:553px;width:911px;height:2.3px;background:#5e5e5e;"></div><span class="t" style="left:12.2px;top:511.6px;font-size:26.4px;color:#e3e3e3;letter-spacing:-0.102px;-webkit-text-stroke:.6px;">Name</span><ul style=""><li style="left:0px;top:555.5px;width:911px;height:46.15px;background:#1f1f1f;"><svg style="left:12px;top:12.975px;" width="29" height="21.2" viewBox="0 0 29 21.2"><path d="M9.500 1.200C5.300 1.200 4.500 2.600 4.500 5.300V7.300C4.500 9.300 3.300 10.300 1 10.600C3.300 10.900 4.500 11.900 4.500 13.900V15.900C4.500 18.600 5.300 20 9.500 20" fill="none" stroke="#ee9668" stroke-width="2.900"/><path d="M19.500 1.200C23.700 1.200 24.500 2.600 24.500 5.300V7.300C24.500 9.300 25.700 10.300 28 10.600C25.700 10.900 24.500 11.900 24.500 13.900V15.900C24.500 18.600 23.700 20 19.500 20" fill="none" stroke="#ee9668" stroke-width="2.900"/><circle cx="14.600" cy="6.800" r="1.900" fill="#ee9668"/><path d="M12.800 11H16.500V13.500L14.500 16.700H12.600L13.700 13.800H12.800z" fill="#ee9668"/></svg><span class="t" style="left:51.6px;top:9.8px;font-size:26.4px;color:#e3e3e3;letter-spacing:0.990px;">appconfiguration</span></li><li style="left:0px;top:601.65px;width:911px;height:46.15px;background:#2a2b2d;"><svg style="left:12px;top:12.975px;" width="29" height="21.2" viewBox="0 0 29 21.2"><path d="M9.500 1.200C5.300 1.200 4.500 2.600 4.500 5.300V7.300C4.500 9.300 3.300 10.300 1 10.600C3.300 10.900 4.500 11.900 4.500 13.900V15.900C4.500 18.600 5.300 20 9.500 20" fill="none" stroke="#ee9668" stroke-width="2.900"/><path d="M19.500 1.200C23.700 1.200 24.500 2.600 24.500 5.300V7.300C24.500 9.300 25.700 10.300 28 10.600C25.700 10.900 24.500 11.900 24.500 13.900V15.900C24.500 18.600 23.700 20 19.500 20" fill="none" stroke="#ee9668" stroke-width="2.900"/><circle cx="14.600" cy="6.800" r="1.900" fill="#ee9668"/><path d="M12.800 11H16.500V13.500L14.500 16.700H12.600L13.700 13.800H12.800z" fill="#ee9668"/></svg><span class="t" style="left:51.6px;top:9.8px;font-size:26.4px;color:#e3e3e3;letter-spacing:0.447px;">token</span></li><li style="left:0px;top:647.8px;width:911px;height:46.15px;background:#1f1f1f;"><svg style="left:12px;top:12.975px;" width="29" height="21.2" viewBox="0 0 29 21.2"><path d="M9.500 1.200C5.300 1.200 4.500 2.600 4.500 5.300V7.300C4.500 9.300 3.300 10.300 1 10.600C3.300 10.900 4.500 11.900 4.500 13.900V15.900C4.500 18.600 5.300 20 9.500 20" fill="none" stroke="#ee9668" stroke-width="2.900"/><path d="M19.500 1.200C23.700 1.200 24.500 2.600 24.500 5.300V7.300C24.500 9.300 25.700 10.300 28 10.600C25.700 10.900 24.500 11.900 24.500 13.900V15.900C24.500 18.600 23.700 20 19.500 20" fill="none" stroke="#ee9668" stroke-width="2.900"/><circle cx="14.600" cy="6.800" r="1.900" fill="#ee9668"/><path d="M12.800 11H16.500V13.500L14.500 16.700H12.600L13.700 13.800H12.800z" fill="#ee9668"/></svg><span class="t" style="left:51.6px;top:9.8px;font-size:26.4px;color:#e3e3e3;letter-spacing:0.614px;">userinfo</span></li><li style="left:0px;top:693.95px;width:911px;height:46.15px;background:#1a4a79;"><svg style="left:12px;top:12.975px;" width="29" height="21.2" viewBox="0 0 29 21.2"><path d="M9.500 1.200C5.300 1.200 4.500 2.600 4.500 5.300V7.300C4.500 9.300 3.300 10.300 1 10.600C3.300 10.900 4.500 11.900 4.500 13.900V15.900C4.500 18.600 5.300 20 9.500 20" fill="none" stroke="#ee9668" stroke-width="2.900"/><path d="M19.500 1.200C23.700 1.200 24.500 2.600 24.500 5.300V7.300C24.500 9.300 25.700 10.300 28 10.600C25.700 10.900 24.500 11.900 24.500 13.900V15.900C24.500 18.600 23.700 20 19.500 20" fill="none" stroke="#ee9668" stroke-width="2.900"/><circle cx="14.600" cy="6.800" r="1.900" fill="#ee9668"/><path d="M12.800 11H16.500V13.500L14.500 16.700H12.600L13.700 13.800H12.800z" fill="#ee9668"/></svg><span class="t" style="left:51.6px;top:9.8px;font-size:26.4px;color:#c6e6ff;letter-spacing:1.536px;">2598496?filePath=8ee98c59-dde7-48e3-858a-26ffff94b7c4.pdf</span></li><li style="left:0px;top:740.1px;width:911px;height:46.15px;background:#1f1f1f;"><svg style="left:13.5px;top:11.575px;" width="26" height="24" viewBox="0 0 26 24"><rect x="1.300" y="1.300" width="23.400" height="21.400" rx="2.500" fill="none" stroke="#7e9ff2" stroke-width="2.600"/><path d="M5.500 7.200H20.500M5.500 12H20.500M5.500 16.800H15.500" stroke="#7e9ff2" stroke-width="2.500"/></svg><span class="t" style="left:51.6px;top:9.8px;font-size:26.4px;color:#e3e3e3;letter-spacing:0.700px;">index-wc.js</span></li><li style="left:0px;top:786.25px;width:911px;height:46.15px;background:#2a2b2d;"><svg style="left:12px;top:12.975px;" width="29" height="21.2" viewBox="0 0 29 21.2"><path d="M9.500 1.200C5.300 1.200 4.500 2.600 4.500 5.300V7.300C4.500 9.300 3.300 10.300 1 10.600C3.300 10.900 4.500 11.900 4.500 13.900V15.900C4.500 18.600 5.300 20 9.500 20" fill="none" stroke="#ee9668" stroke-width="2.900"/><path d="M19.500 1.200C23.700 1.200 24.500 2.600 24.500 5.300V7.300C24.500 9.300 25.700 10.300 28 10.600C25.700 10.900 24.500 11.900 24.500 13.900V15.900C24.500 18.600 23.700 20 19.500 20" fill="none" stroke="#ee9668" stroke-width="2.900"/><circle cx="14.600" cy="6.800" r="1.900" fill="#ee9668"/><path d="M12.800 11H16.500V13.500L14.500 16.700H12.600L13.700 13.800H12.800z" fill="#ee9668"/></svg><span class="t" style="left:51.6px;top:9.8px;font-size:26.4px;color:#e3e3e3;letter-spacing:0.897px;">comments?standardId=2598496&amp;replies=true</span></li><li style="left:0px;top:832.4px;width:911px;height:46.15px;background:#1f1f1f;"><svg style="left:12px;top:12.975px;" width="29" height="21.2" viewBox="0 0 29 21.2"><path d="M9.500 1.200C5.300 1.200 4.500 2.600 4.500 5.300V7.300C4.500 9.300 3.300 10.300 1 10.600C3.300 10.900 4.500 11.900 4.500 13.900V15.900C4.500 18.600 5.300 20 9.500 20" fill="none" stroke="#ee9668" stroke-width="2.900"/><path d="M19.500 1.200C23.700 1.200 24.500 2.600 24.500 5.300V7.300C24.500 9.300 25.700 10.300 28 10.600C25.700 10.900 24.500 11.900 24.500 13.900V15.900C24.500 18.600 23.700 20 19.500 20" fill="none" stroke="#ee9668" stroke-width="2.900"/><circle cx="14.600" cy="6.800" r="1.900" fill="#ee9668"/><path d="M12.800 11H16.500V13.500L14.500 16.700H12.600L13.700 13.800H12.800z" fill="#ee9668"/></svg><span class="t" style="left:51.6px;top:9.8px;font-size:26.4px;color:#e3e3e3;letter-spacing:0.700px;">user-teams</span></li><li style="left:0px;top:878.55px;width:911px;height:46.15px;background:#2a2b2d;"><svg style="left:12px;top:12.975px;" width="29" height="21.2" viewBox="0 0 29 21.2"><path d="M9.500 1.200C5.300 1.200 4.500 2.600 4.500 5.300V7.300C4.500 9.300 3.300 10.300 1 10.600C3.300 10.900 4.500 11.900 4.500 13.900V15.900C4.500 18.600 5.300 20 9.500 20" fill="none" stroke="#ee9668" stroke-width="2.900"/><path d="M19.500 1.200C23.700 1.200 24.500 2.600 24.500 5.300V7.300C24.500 9.300 25.700 10.300 28 10.600C25.700 10.900 24.500 11.900 24.500 13.900V15.900C24.500 18.600 23.700 20 19.500 20" fill="none" stroke="#ee9668" stroke-width="2.900"/><circle cx="14.600" cy="6.800" r="1.900" fill="#ee9668"/><path d="M12.800 11H16.500V13.500L14.500 16.700H12.600L13.700 13.800H12.800z" fill="#ee9668"/></svg><span class="t" style="left:51.6px;top:9.8px;font-size:26.4px;color:#e3e3e3;letter-spacing:0.700px;">translations?lang=nb</span></li><li style="left:0px;top:924.7px;width:911px;height:46.15px;background:#1f1f1f;"><svg style="left:12.6px;top:8.775px;" width="28" height="28" viewBox="0 0 28 28"><circle cx="14" cy="14" r="14" fill="#e3695f"/><path d="M8.300 8.300 19.700 19.700M19.700 8.300 8.300 19.700" stroke="#1f1f1f" stroke-width="3"/></svg><span class="t" style="left:51.6px;top:9.8px;font-size:26.4px;color:#ecb3ae;letter-spacing:0.700px;">translations?lang=en</span></li><li style="left:0px;top:970.85px;width:911px;height:46.15px;background:#2a2b2d;"><svg style="left:14.2px;top:10.575px;" width="25" height="24.4" viewBox="0 0 25 24.4"><path d="M3.300 1.300H16L23.700 9V21.100A2 2 0 0 1 21.700 23.100H3.300A2 2 0 0 1 1.300 21.100V3.300A2 2 0 0 1 3.300 1.300z" fill="none" stroke="#c7c7c7" stroke-width="2.600" stroke-linejoin="round"/><path d="M15.500 1.500V9.500H23.500z" fill="#c7c7c7"/></svg><span class="t" style="left:51.6px;top:9.8px;font-size:26.4px;color:#e3e3e3;letter-spacing:0.700px;">pdfnet.res</span></li><li style="left:0px;top:1017px;width:911px;height:46.15px;background:#1f1f1f;"><svg style="left:14.2px;top:10.575px;" width="25" height="24.4" viewBox="0 0 25 24.4"><path d="M3.300 1.300H16L23.700 9V21.100A2 2 0 0 1 21.700 23.100H3.300A2 2 0 0 1 1.300 21.100V3.300A2 2 0 0 1 3.300 1.300z" fill="none" stroke="#c7c7c7" stroke-width="2.600" stroke-linejoin="round"/><path d="M15.500 1.500V9.500H23.500z" fill="#c7c7c7"/></svg><svg style="left:50.8px;top:15.375px;" width="15.4" height="15.4" viewBox="0 0 15.4 15.4"><g transform="scale(.4667)"><path d="M16.50 2.75L17.10 2.77L17.70 2.84L18.28 2.99L18.83 3.30L19.28 3.98L19.55 5.10L19.74 6.23L19.99 6.91L20.32 7.29L20.68 7.54L21.05 7.76L21.43 7.97L21.80 8.19L22.17 8.40L22.57 8.59L23.06 8.69L23.78 8.56L24.84 8.16L25.96 7.83L26.76 7.89L27.31 8.20L27.73 8.64L28.09 9.12L28.41 9.62L28.69 10.15L28.93 10.71L29.09 11.28L29.09 11.92L28.74 12.64L27.90 13.45L27.02 14.17L26.55 14.73L26.39 15.20L26.35 15.64L26.35 16.07L26.35 16.50L26.35 16.93L26.35 17.36L26.39 17.80L26.55 18.27L27.02 18.83L27.90 19.55L28.74 20.36L29.09 21.08L29.09 21.72L28.93 22.29L28.69 22.85L28.41 23.37L28.09 23.88L27.73 24.36L27.31 24.80L26.76 25.11L25.96 25.17L24.84 24.84L23.78 24.44L23.06 24.31L22.57 24.41L22.17 24.60L21.80 24.81L21.43 25.03L21.05 25.24L20.68 25.46L20.32 25.71L19.99 26.09L19.74 26.77L19.55 27.90L19.28 29.02L18.83 29.70L18.28 30.01L17.70 30.16L17.10 30.23L16.50 30.25L15.90 30.23L15.30 30.16L14.72 30.01L14.17 29.70L13.72 29.02L13.45 27.90L13.26 26.77L13.01 26.09L12.68 25.71L12.32 25.46L11.95 25.24L11.57 25.03L11.20 24.81L10.83 24.60L10.43 24.41L9.94 24.31L9.22 24.44L8.16 24.84L7.04 25.17L6.24 25.11L5.69 24.80L5.27 24.36L4.91 23.88L4.59 23.38L4.31 22.85L4.07 22.29L3.91 21.72L3.91 21.08L4.26 20.36L5.10 19.55L5.98 18.83L6.45 18.27L6.61 17.80L6.65 17.36L6.65 16.93L6.65 16.50L6.65 16.07L6.65 15.64L6.61 15.20L6.45 14.73L5.98 14.17L5.10 13.45L4.26 12.64L3.91 11.92L3.91 11.28L4.07 10.71L4.31 10.15L4.59 9.63L4.91 9.12L5.27 8.64L5.69 8.20L6.24 7.89L7.04 7.83L8.16 8.16L9.22 8.56L9.94 8.69L10.43 8.59L10.83 8.40L11.20 8.19L11.58 7.97L11.95 7.76L12.32 7.54L12.68 7.29L13.01 6.91L13.26 6.23L13.45 5.10L13.72 3.98L14.17 3.30L14.72 2.99L15.30 2.84L15.90 2.77z" fill="none" stroke="#e3e3e3" stroke-width="5.5" stroke-linejoin="round"/><circle cx="16.5" cy="16.5" r="0" fill="#e3e3e3"/></g></svg><span class="t" style="left:75.0px;top:9.8px;font-size:26.4px;color:#e3e3e3;letter-spacing:0.700px;">PDFNetCWasm.br.wasm</span></li></ul></section><div style="left:911px;top:496px;width:2.3px;height:1036px;background:#5e5e5e;"></div><section id="request-details" style=""><div style="left:913.3px;top:496px;width:948.7px;height:57.5px;background:#3c3c3c;"></div><div style="left:913.3px;top:553px;width:948.7px;height:2.3px;background:#5e5e5e;"></div><svg style="left:946.5px;top:515px;" width="21.5" height="21.5" viewBox="0 0 21.5 21.5"><path d="M1.200 1.200 20.300 20.300M20.300 1.200 1.200 20.300" stroke="#c7c7c7" stroke-width="2.900"/></svg><span class="t" style="left:1015.3px;top:513.3px;font-size:26.4px;color:#c7c7c7;letter-spacing:0.748px;-webkit-text-stroke:.6px;">Headers</span><span class="t" style="left:1167.0px;top:513.3px;font-size:26.4px;color:#c7c7c7;letter-spacing:0.375px;-webkit-text-stroke:.6px;">Payload</span><span class="t" style="left:1312.0px;top:513.3px;font-size:26.4px;color:#c7c7c7;letter-spacing:0.675px;-webkit-text-stroke:.6px;">Preview</span><span class="t" style="left:1456.7px;top:513.3px;font-size:26.4px;color:#a8c7fa;letter-spacing:0.557px;-webkit-text-stroke:.6px;">Response</span><span class="t" style="left:1627.0px;top:513.3px;font-size:26.4px;color:#c7c7c7;letter-spacing:1.117px;-webkit-text-stroke:.6px;">Initiator</span><div style="left:1434px;top:550px;width:170px;height:4.3px;background:#a8c7fa;border-radius:4px 4px 0 0;"></div><svg style="left:1756px;top:515.5px;" width="28" height="21" viewBox="0 0 28 21"><path d="M1.500 1.500 11 10.500 1.500 19.500M14.500 1.500 24 10.500 14.500 19.500" fill="none" stroke="#9e9e9e" stroke-width="2.800"/></svg><div id="response-body" class="clip" style="left:913.3px;top:555.3px;width:920px;height:950px;background:#282828;border-bottom:1.500px solid #3f3f3f;border-right:1.500px solid #454545;"><div style="left:132.2px;top:378.7px;width:790px;height:31px;background:#3a3a3a;"></div><div style="left:132.2px;top:409.7px;width:15px;height:29.5px;background:#454545;"></div><div style="left:126.2px;top:0px;width:1.8px;height:409.3px;background:#6a6a6a;"></div><div style="left:184.2px;top:0px;width:1.8px;height:274.1px;background:#6a6a6a;"></div><div style="left:242.2px;top:0px;width:1.8px;height:71.3px;background:#6a6a6a;"></div><div style="left:67.2px;top:19.1px;width:13.5px;height:3.3px;background:#a8c7fa;"></div><code class="t" style="left:306.7px;top:9.0px;font-size:24.2px;color:#e3e3e3;font-family:'DejaVu Sans Mono', 'Liberation Mono', monospace;font-weight:400;"><span style="color:#f0956a">"downloadableFileTypes"</span>: [],</code><div style="left:67.2px;top:52.9px;width:13.5px;height:3.3px;background:#a8c7fa;"></div><code class="t" style="left:306.7px;top:42.8px;font-size:24.2px;color:#e3e3e3;font-family:'DejaVu Sans Mono', 'Liberation Mono', monospace;font-weight:400;"><span style="color:#f0956a">"canChat"</span>: <span style="color:#c4eed0">false</span></code><div style="left:67.2px;top:86.7px;width:13.5px;height:3.3px;background:#a8c7fa;"></div><code class="t" style="left:248.5px;top:76.6px;font-size:24.2px;color:#e3e3e3;font-family:'DejaVu Sans Mono', 'Liberation Mono', monospace;font-weight:400;">},</code><div style="left:67.2px;top:120.5px;width:13.5px;height:3.3px;background:#a8c7fa;"></div><code class="t" style="left:248.5px;top:110.4px;font-size:24.2px;color:#e3e3e3;font-family:'DejaVu Sans Mono', 'Liberation Mono', monospace;font-weight:400;"><span style="color:#f0956a">"customCssClientCode"</span>: <span style="color:#f0956a">"so"</span>,</code><div style="left:67.2px;top:154.3px;width:13.5px;height:3.3px;background:#a8c7fa;"></div><code class="t" style="left:248.5px;top:144.2px;font-size:24.2px;color:#e3e3e3;font-family:'DejaVu Sans Mono', 'Liberation Mono', monospace;font-weight:400;"><span style="color:#f0956a">"isPdf"</span>: <span style="color:#c4eed0">true</span>,</code><div style="left:67.2px;top:188.1px;width:13.5px;height:3.3px;background:#a8c7fa;"></div><code class="t" style="left:248.5px;top:178.0px;font-size:24.2px;color:#e3e3e3;font-family:'DejaVu Sans Mono', 'Liberation Mono', monospace;font-weight:400;"><span style="color:#f0956a">"favouritedRequirementIds"</span>: [],</code><div style="left:67.2px;top:221.9px;width:13.5px;height:3.3px;background:#a8c7fa;"></div><code class="t" style="left:248.5px;top:211.8px;font-size:24.2px;color:#e3e3e3;font-family:'DejaVu Sans Mono', 'Liberation Mono', monospace;font-weight:400;"><span style="color:#f0956a">"xmlFileInfo"</span>: <span style="color:#b07ef0">null</span>,</code><div style="left:67.2px;top:255.7px;width:13.5px;height:3.3px;background:#a8c7fa;"></div><code class="t" style="left:248.5px;top:245.6px;font-size:24.2px;color:#e3e3e3;font-family:'DejaVu Sans Mono', 'Liberation Mono', monospace;font-weight:400;"><span style="color:#f0956a">"openForCommenting"</span>: <span style="color:#c4eed0">false</span></code><div style="left:67.2px;top:289.5px;width:13.5px;height:3.3px;background:#a8c7fa;"></div><code class="t" style="left:190.2px;top:279.4px;font-size:24.2px;color:#e3e3e3;font-family:'DejaVu Sans Mono', 'Liberation Mono', monospace;font-weight:400;">},</code><div style="left:67.2px;top:323.3px;width:13.5px;height:3.3px;background:#a8c7fa;"></div><code class="t" style="left:190.2px;top:313.2px;font-size:24.2px;color:#e3e3e3;font-family:'DejaVu Sans Mono', 'Liberation Mono', monospace;font-weight:400;"><span style="color:#f0956a">"standardContent"</span>: <span style="color:#b07ef0">null</span>,</code><div style="left:67.2px;top:357.1px;width:13.5px;height:3.3px;background:#a8c7fa;"></div><code class="t" style="left:190.2px;top:347.0px;font-size:24.2px;color:#e3e3e3;font-family:'DejaVu Sans Mono', 'Liberation Mono', monospace;font-weight:400;"><span style="color:#f0956a">"pdfContentBase64"</span>: <span style="color:#f0956a">"data</span><span style="color:#f0956a">:application/pdf;base64,JVBERi0xLjcNCiW1tbW1</span></code><div style="left:67.2px;top:390.9px;width:13.5px;height:3.3px;background:#a8c7fa;"></div><code class="t" style="left:190.2px;top:380.8px;font-size:24.2px;color:#e3e3e3;font-family:'DejaVu Sans Mono', 'Liberation Mono', monospace;font-weight:400;"><span style="color:#f0956a">"messageType"</span>: <span style="color:#f0956a">""</span></code><code class="t" style="left:131.9px;top:414.6px;font-size:24.2px;color:#e3e3e3;font-family:'DejaVu Sans Mono', 'Liberation Mono', monospace;font-weight:400;">}</code></div><div style="left:1840.5px;top:1309px;width:15px;height:128.5px;background:#6c6c6c;border-radius:8px;"></div></section><footer id="network-status" style=""><div style="left:0px;top:1532px;width:1862px;height:4px;background:#5e5e5e;"></div><div style="left:0px;top:1536px;width:1862px;height:58px;background:#282828;"></div><div style="left:0px;top:1594px;width:1862px;height:2px;background:#5e5e5e;"></div><span class="t" style="left:21.7px;top:1550.5px;font-size:26.4px;color:#c7c7c7;letter-spacing:0.530px;">11 / 65 requests</span><div style="left:238px;top:1548px;width:2.5px;height:34px;background:#5e5e5e;"></div><span class="t" style="left:261.0px;top:1550.5px;font-size:26.4px;color:#c7c7c7;letter-spacing:0.782px;">2,968 kB / 20,920 kB transferred</span><span class="t" style="left:972.5px;top:1550.5px;font-size:26.4px;color:#c7c7c7;letter-spacing:0.870px;">13 lines, 23 characters selected</span></footer><section id="drawer" style=""><div style="left:0px;top:1596px;width:1862px;height:524px;background:#3c3c3c;"></div><div style="left:0px;top:1653.6px;width:1862px;height:2px;background:#5e5e5e;"></div><div style="left:31px;top:1610px;width:7px;height:7px;background:#c7c7c7;border-radius:4px;"></div><div style="left:31px;top:1621.5px;width:7px;height:7px;background:#c7c7c7;border-radius:4px;"></div><div style="left:31px;top:1633px;width:7px;height:7px;background:#c7c7c7;border-radius:4px;"></div><span class="t" style="left:84.4px;top:1613.9px;font-size:26.4px;color:#c7c7c7;letter-spacing:0.710px;-webkit-text-stroke:.6px;">Console</span><span class="t" style="left:231.6px;top:1613.9px;font-size:26.4px;color:#a8c7fa;letter-spacing:1.182px;-webkit-text-stroke:.6px;">What's new</span><svg style="left:389.5px;top:1617px;" width="17.5" height="17.5" viewBox="0 0 17.5 17.5"><path d="M1 1 16.500 16.500M16.500 1 1 16.500" stroke="#c7c7c7" stroke-width="2.600"/></svg><div style="left:210px;top:1649.6px;width:214px;height:4px;background:#a8c7fa;border-radius:4px 4px 0 0;"></div><svg style="left:1745.6px;top:1610px;" width="31" height="31" viewBox="0 0 31 31"><rect x="1.500" y="1.500" width="28" height="28" rx="2.500" fill="none" stroke="#c7c7c7" stroke-width="3"/><path d="M20.500 2V29" stroke="#c7c7c7" stroke-width="3"/></svg><svg style="left:1809.5px;top:1614px;" width="21.5" height="21.5" viewBox="0 0 21.5 21.5"><path d="M1.200 1.200 20.300 20.300M20.300 1.200 1.200 20.300" stroke="#c7c7c7" stroke-width="2.900"/></svg><svg style="left:327px;top:1691.5px;" width="70" height="70" viewBox="0 0 70 70"><circle cx="35" cy="35" r="35" fill="#3e76e2"/><circle cx="35" cy="35" r="29.500" fill="none" stroke="#fff" stroke-width="3.200"/><circle cx="35" cy="35" r="12.200" fill="none" stroke="#fff" stroke-width="3.200"/><path d="M35.00 22.80L61.86 22.80M45.57 41.10L32.14 64.36M24.43 41.10L11.00 17.84" stroke="#fff" stroke-width="3.200" fill="none"/></svg><h2 class="t" style="left:420.2px;top:1709.0px;font-size:35.2px;color:#e3e3e3;letter-spacing:0.484px;-webkit-text-stroke:.6px;">What's new in DevTools 146</h2><button style="left:326px;top:1796px;width:313.3px;height:53px;background:#adc6f7;border-radius:27px;"><span class="t" style="left:30.0px;top:12.6px;font-size:28.6px;color:#0f2f6e;letter-spacing:-0.270px;-webkit-text-stroke:.6px;">See all new features</span></button><div style="left:282px;top:1893px;width:1268px;height:300px;background:#1f1f1f;border-radius:46px;"><div style="left:43.5px;top:44px;width:1180px;height:260px;background:#323336;border-radius:34px;"><a class="t" style="left:36.5px;top:34.4px;font-size:33px;color:#a8c7fa;font-weight:700;letter-spacing:-0.602px;text-decoration:underline;text-decoration-thickness:2.500px;text-underline-offset:4px;">MCP server</a><p class="t" style="left:36.5px;top:106.3px;font-size:28.6px;color:#e3e3e3;letter-spacing:-0.245px;">CrUX data in performance trace summaries, a new --slim mode, specialized skills and</p><p class="t" style="left:36.5px;top:146.3px;font-size:28.6px;color:#e3e3e3;letter-spacing:-0.208px;">experimental screen recording support.</p></div></div><div style="left:1833.5px;top:1655.6px;width:28.5px;height:465px;background:#2b2b2b;"></div><div style="left:1840px;top:1661px;width:15px;height:191px;background:#6c6c6c;border-radius:8px;"></div></section></aside><ul id="context-menu" style="left:1737.5px;top:811.8px;width:397px;height:751px;background:linear-gradient(135deg,#1c1d20 0%,#1f1f21 40%,#222326 100%);border-radius:27px;border:1.500px solid #4b4c4f;box-shadow:0 12px 36px rgba(0,0,0,.32),0 0 0 1px rgba(0,0,0,.3);"><li class="t" style="left:29.8px;top:19.8px;font-size:27px;color:#e2e2e3;letter-spacing:-0.152px;-webkit-text-stroke:.4px;">Open in Sources panel</li><li class="t" style="left:29.8px;top:67.7px;font-size:27px;color:#e2e2e3;letter-spacing:-0.043px;-webkit-text-stroke:.4px;">Open in new tab</li><li role="separator" style="left:29px;top:113.7px;width:335.7px;height:2.2px;background:#48484a;"></li><li class="t" style="left:29.8px;top:137.6px;font-size:27px;color:#e2e2e3;letter-spacing:-0.032px;-webkit-text-stroke:.4px;">Clear browser cache</li><li class="t" style="left:29.8px;top:185.2px;font-size:27px;color:#e2e2e3;letter-spacing:-0.005px;-webkit-text-stroke:.4px;">Clear browser cookies</li><li role="separator" style="left:29px;top:231.7px;width:335.7px;height:2.2px;background:#48484a;"></li><li style="left:6.8px;top:243.5px;width:380.7px;height:48px;background:#3f3f42;border-radius:16px;"><span class="t" style="left:23.0px;top:11.7px;font-size:27px;color:#e2e2e3;letter-spacing:-0.383px;-webkit-text-stroke:.4px;">Copy</span><svg style="left:343.2px;top:12.7px;" width="13" height="24" viewBox="0 0 13 24"><path d="M2 3.300 10.600 12 2 20.700" fill="none" stroke="#e2e2e3" stroke-width="3.400"/></svg></li><li role="separator" style="left:29px;top:300.7px;width:335.7px;height:2.2px;background:#48484a;"></li><li class="t" style="left:29.8px;top:325.2px;font-size:27px;color:#e2e2e3;letter-spacing:0.065px;-webkit-text-stroke:.4px;">Block requests</li><svg style="left:350px;top:326.2px;" width="13" height="24" viewBox="0 0 13 24"><path d="M2 3.300 10.600 12 2 20.700" fill="none" stroke="#e2e2e3" stroke-width="3.400"/></svg><li class="t" style="left:29.8px;top:373.7px;font-size:27px;color:#e2e2e3;letter-spacing:0.259px;-webkit-text-stroke:.4px;">Throttle requests</li><svg style="left:350px;top:374.7px;" width="13" height="24" viewBox="0 0 13 24"><path d="M2 3.300 10.600 12 2 20.700" fill="none" stroke="#e2e2e3" stroke-width="3.400"/></svg><li class="t" style="left:29.8px;top:421.9px;font-size:27px;color:#e2e2e3;letter-spacing:-0.806px;-webkit-text-stroke:.4px;">Replay XHR</li><li role="separator" style="left:29px;top:467.7px;width:335.7px;height:2.2px;background:#48484a;"></li><li class="t" style="left:29.8px;top:491.2px;font-size:27px;color:#e2e2e3;letter-spacing:0.065px;-webkit-text-stroke:.4px;">Sort by</li><svg style="left:350px;top:492.2px;" width="13" height="24" viewBox="0 0 13 24"><path d="M2 3.300 10.600 12 2 20.700" fill="none" stroke="#e2e2e3" stroke-width="3.400"/></svg><li class="t" style="left:29.8px;top:539.7px;font-size:27px;color:#e2e2e3;letter-spacing:0.098px;-webkit-text-stroke:.4px;">Header options</li><svg style="left:350px;top:540.7px;" width="13" height="24" viewBox="0 0 13 24"><path d="M2 3.300 10.600 12 2 20.700" fill="none" stroke="#e2e2e3" stroke-width="3.400"/></svg><li role="separator" style="left:29px;top:585.5px;width:335.7px;height:2.2px;background:#48484a;"></li><li class="t" style="left:29.8px;top:609.2px;font-size:27px;color:#e2e2e3;letter-spacing:-0.038px;-webkit-text-stroke:.4px;">Override headers</li><li class="t" style="left:29.8px;top:657.2px;font-size:27px;color:#e2e2e3;letter-spacing:0.243px;-webkit-text-stroke:.4px;">Override content</li><li class="t" style="left:29.8px;top:705.2px;font-size:27px;color:#e2e2e3;letter-spacing:-0.089px;-webkit-text-stroke:.4px;">Show all overrides</li></ul><ul id="copy-submenu" style="left:2127px;top:1046.4px;width:463.6px;height:685.4px;background:linear-gradient(135deg,#1c1d20 0%,#1f1f21 40%,#222326 100%);border-radius:27px;border:1.500px solid #4b4c4f;box-shadow:0 12px 36px rgba(0,0,0,.32),0 0 0 1px rgba(0,0,0,.3);"><li class="t" style="left:30.7px;top:19.4px;font-size:27px;color:#e2e2e3;letter-spacing:-0.631px;-webkit-text-stroke:.4px;">Copy URL</li><li class="t" style="left:30.7px;top:67.6px;font-size:27px;color:#e2e2e3;letter-spacing:-0.423px;-webkit-text-stroke:.4px;">Copy as cURL</li><li class="t" style="left:30.7px;top:115.6px;font-size:27px;color:#e2e2e3;letter-spacing:-0.285px;-webkit-text-stroke:.4px;">Copy as PowerShell</li><li class="t" style="left:30.7px;top:163.6px;font-size:27px;color:#e2e2e3;letter-spacing:0.070px;-webkit-text-stroke:.4px;">Copy as fetch</li><li style="left:7.5px;top:201.5px;width:445.5px;height:47.2px;background:#2b56b9;border-radius:16px;"><span class="t" style="left:23.2px;top:10.1px;font-size:27px;color:#ffffff;letter-spacing:0.060px;-webkit-text-stroke:.4px;">Copy as fetch (Node.js)</span></li><li role="separator" style="left:30px;top:259.1px;width:401.3px;height:2.2px;background:#48484a;"></li><li class="t" style="left:30.7px;top:281.6px;font-size:27px;color:#e2e2e3;letter-spacing:-0.085px;-webkit-text-stroke:.4px;">Copy response</li><li class="t" style="left:30.7px;top:329.6px;font-size:27px;color:#e2e2e3;letter-spacing:0.151px;-webkit-text-stroke:.4px;">Copy stack trace</li><li role="separator" style="left:30px;top:376.1px;width:401.3px;height:2.2px;background:#48484a;"></li><li class="t" style="left:30.7px;top:399.6px;font-size:27px;color:#e2e2e3;letter-spacing:-0.155px;-webkit-text-stroke:.4px;">Copy all listed URLs</li><li class="t" style="left:30.7px;top:447.3px;font-size:27px;color:#e2e2e3;letter-spacing:-0.136px;-webkit-text-stroke:.4px;">Copy all listed as cURL</li><li class="t" style="left:30.7px;top:495.6px;font-size:27px;color:#e2e2e3;letter-spacing:-0.109px;-webkit-text-stroke:.4px;">Copy all listed as PowerShell</li><li class="t" style="left:30.7px;top:543.6px;font-size:27px;color:#e2e2e3;letter-spacing:0.119px;-webkit-text-stroke:.4px;">Copy all listed as fetch</li><li class="t" style="left:30.7px;top:591.6px;font-size:27px;color:#e2e2e3;letter-spacing:0.113px;-webkit-text-stroke:.4px;">Copy all listed as fetch (Node.js)</li><li class="t" style="left:30.7px;top:639.6px;font-size:27px;color:#e2e2e3;letter-spacing:-0.063px;-webkit-text-stroke:.4px;">Copy all listed as HAR (sanitized)</li></ul></body></html>
